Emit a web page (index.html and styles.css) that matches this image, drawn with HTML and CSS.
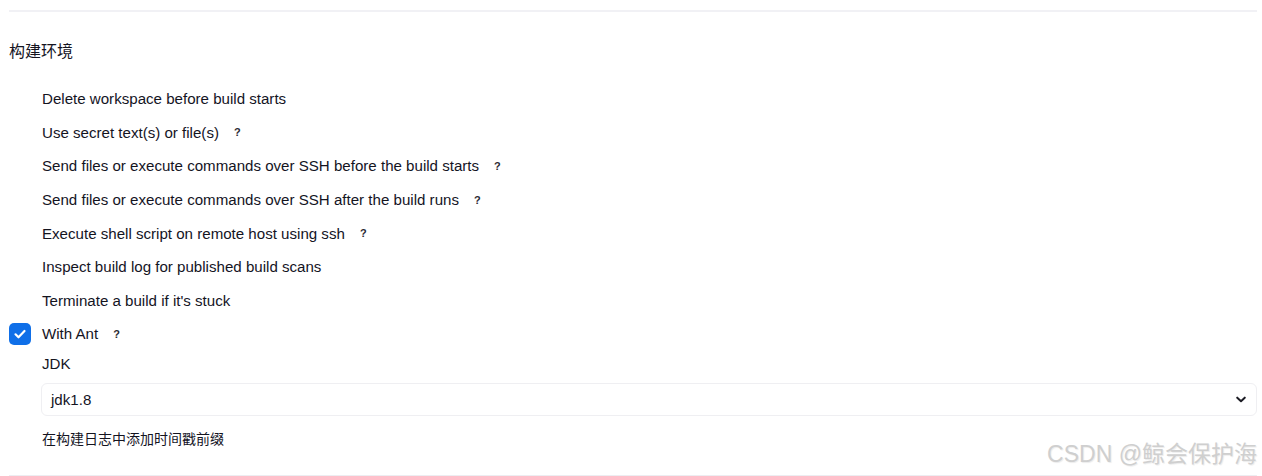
FILE: index.html
```html
<!DOCTYPE html>
<html lang="zh-CN">
<head>
<meta charset="utf-8">
<title>构建环境</title>
<link rel="stylesheet" href="styles.css">
</head>
<body>
<div class="page">
  <div class="rule rule-top"></div>
  <h2 class="section-title">构建环境</h2>
  <div class="options">
    <label class="option"><span class="box"></span><span class="text">Delete workspace before build starts</span></label>
    <label class="option"><span class="box"></span><span class="text">Use secret text(s) or file(s)</span><span class="help">?</span></label>
    <label class="option"><span class="box"></span><span class="text">Send files or execute commands over SSH before the build starts</span><span class="help">?</span></label>
    <label class="option"><span class="box"></span><span class="text">Send files or execute commands over SSH after the build runs</span><span class="help">?</span></label>
    <label class="option"><span class="box"></span><span class="text">Execute shell script on remote host using ssh</span><span class="help">?</span></label>
    <label class="option"><span class="box"></span><span class="text">Inspect build log for published build scans</span></label>
    <label class="option"><span class="box"></span><span class="text">Terminate a build if it's stuck</span></label>
    <label class="option"><span class="box checked"><svg viewBox="0 0 22 22" width="22" height="22"><path d="M6.5 11.3l3 3 6-6.3" fill="none" stroke="#fff" stroke-width="2.2" stroke-linecap="round" stroke-linejoin="round"/></svg></span><span class="text">With Ant</span><span class="help">?</span></label>
  </div>
  <div class="nested">
    <div class="field-label">JDK</div>
    <div class="select">
      <span class="select-value">jdk1.8</span>
      <svg class="chevron" viewBox="0 0 12 8" width="10" height="7"><path d="M1.5 1.8l4.5 4.2 4.5-4.2" fill="none" stroke="#1c1c24" stroke-width="2.4" stroke-linecap="round" stroke-linejoin="round"/></svg>
    </div>
    <div class="desc">在构建日志中添加时间戳前缀</div>
  </div>
  <div class="rule rule-bottom"></div>
</div>
<div class="watermark">CSDN @鲸会保护海</div>
</body>
</html>
```
FILE: styles.css
```css
html, body {
  margin: 0;
  padding: 0;
  background: #fff;
}
body {
  font-family: "Liberation Sans", Arial, "Noto Sans CJK SC", sans-serif;
  color: #14141f;
  font-size: 14px;
  width: 1262px;
  height: 476px;
  overflow: hidden;
  position: relative;
}
.page {
  padding: 0 5px 0 9px;
}
.rule {
  height: 2px;
  background: #f1f1f5;
}
.rule-top {
  margin-top: 10px;
}
.rule-bottom {
  height: 1px;
  margin-top: 27px;
  background: #ededf1;
}
.section-title {
  margin: 26px 0 0;
  font-weight: 400;
  font-size: 16px;
  line-height: 24px;
  font-family: "Noto Sans CJK SC", sans-serif;
  color: #14141f;
}
.options {
  margin-top: 20px;
  display: flex;
  flex-direction: column;
}
.option {
  height: 33.6px;
  display: flex;
  align-items: center;
  font-size: 15.1px;
}
.box {
  width: 22px;
  height: 22px;
  border-radius: 5px;
  margin-right: 11px;
  flex: none;
  display: flex;
}
.box.checked {
  background: #0f6fe8;
}
.help {
  margin-left: 15px;
  font-size: 11px;
  font-weight: 700;
  color: #2a2a33;
}
.nested {
  padding-left: 32px;
}
.field-label {
  margin-top: 3px;
  padding-left: 1px;
  line-height: 20px;
  font-size: 15.1px;
}
.select {
  margin-top: 9px;
  height: 31px;
  border: 1px solid #efeff2;
  border-radius: 6px;
  display: flex;
  align-items: center;
  justify-content: space-between;
  padding: 0 10px 0 9px;
}
.select-value {
  font-size: 15.1px;
}
.desc {
  margin-top: 12px;
  padding-left: 1px;
  line-height: 20px;
  font-size: 14px;
  font-family: "Noto Sans CJK SC", sans-serif;
}
.watermark {
  position: absolute;
  right: 5px;
  top: 439px;
  font-size: 23px;
  line-height: 30px;
  color: #cfcfcf;
  font-family: "Liberation Sans", "Noto Sans CJK SC", sans-serif;
  text-shadow: 1px 1px 1px rgba(0,0,0,0.08);
}
```
